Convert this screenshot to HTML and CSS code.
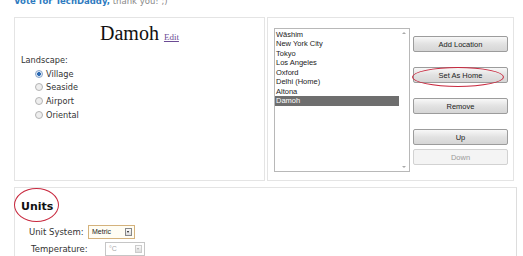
FILE: index.html
```html
<!DOCTYPE html>
<html>
<head>
  <title>Locations</title>
  <link rel="stylesheet" href="styles.css">
</head>
<body>
  <div class="vote"><b>Vote for TechDaddy,</b> thank you! ;)</div>

  <div class="row">
    <div class="panel left">
      <h1 class="city">Damoh <a href="#" class="edit">Edit</a></h1>
      <div class="label">Landscape:</div>
      <div class="radios">
        <div class="radio"><span class="dot on"></span>Village</div>
        <div class="radio"><span class="dot"></span>Seaside</div>
        <div class="radio"><span class="dot"></span>Airport</div>
        <div class="radio"><span class="dot"></span>Oriental</div>
      </div>
    </div>

    <div class="panel right">
      <div class="listbox">
        <div class="items">
          <div>Wāshim</div>
          <div>New York City</div>
          <div>Tokyo</div>
          <div>Los Angeles</div>
          <div>Oxford</div>
          <div>Delhi (Home)</div>
          <div>Altona</div>
          <div class="sel">Damoh</div>
        </div>
        <div class="scroll"><span class="up"></span><span class="down"></span></div>
      </div>
      <div class="buttons">
        <button class="btn add">Add Location</button>
        <button class="btn home">Set As Home</button>
        <button class="btn remove">Remove</button>
        <button class="btn upb">Up</button>
        <button class="btn downb" disabled>Down</button>
      </div>
      <span class="ring ring-home"></span>
    </div>
  </div>

  <div class="panel units">
    <h2 class="units-title">Units</h2>
    <span class="ring ring-units"></span>
    <div class="field sys">
      <span class="flabel">Unit System:</span>
      <span class="select active"><span class="val">Metric</span><span class="arrow"></span></span>
    </div>
    <div class="field temp">
      <span class="flabel">Temperature:</span>
      <span class="select off"><span class="val">°C</span><span class="arrow"></span></span>
    </div>
  </div>
</body>
</html>
```

FILE: styles.css
```css
body { margin: 0; background: #fff; font-family: "DejaVu Sans", Verdana, sans-serif; color: #333; }

.vote { font-size: 8.5px; line-height: 10px; margin: -4px 0 0 14px; height: 6px; color: #888; white-space: nowrap; }
.vote b { color: #2f7bbf; }

.row { display: flex; gap: 2px; margin: 15px 0 0 14px; width: 500px; }
.panel { border: 1px solid #e4e4e4; box-sizing: border-box; background: #fff; }
.left { width: 251px; height: 164px; }
.right { width: 247px; height: 164px; position: relative; display: flex; padding: 10px 0 0 6px; }

.city { margin: 3px 0 0; text-align: center; font: normal 20px/24px "Liberation Serif", serif; color: #111; }
.edit { font-size: 9px; color: #6b4b94; }

.label { font-size: 8.2px; line-height: 12px; margin: 5px 0 0 6px; }
.radios { margin: 1px 0 0 20px; }
.radio { font-size: 8.2px; height: 13.6px; display: flex; align-items: center; gap: 3px; }
.dot { width: 6px; height: 6px; border-radius: 50%; border: 1px solid #b4b4b4; background: #eee; box-sizing: content-box; }
.dot.on { background: radial-gradient(circle, #2d6bb5 0 1.6px, #dfe8f4 2.2px); border-color: #8aa6c8; }

.listbox { width: 136px; height: 144px; border: 1px solid #b8b8b8; box-sizing: border-box; display: flex; font-family: "Liberation Sans", Arial, sans-serif; font-size: 7.5px; color: #222; }
.items { flex: 1; padding-top: 0.5px; }
.items div { height: 9.5px; line-height: 9.5px; padding-left: 1px; }
.items .sel { background: #6e6e6e; color: #fff; }
.scroll { width: 10px; display: flex; flex-direction: column; justify-content: space-between; align-items: center; padding: 3px 0; }
.scroll span { width: 0; height: 0; border-left: 2px solid transparent; border-right: 2px solid transparent; }
.scroll .up { border-bottom: 2px solid #aaa; }
.scroll .down { border-top: 2px solid #aaa; }

.buttons { display: flex; flex-direction: column; margin-left: 3px; padding-top: 8px; }
.btn { width: 95px; height: 16px; padding: 0; font: 7.5px "Liberation Sans", Arial, sans-serif; color: #222; border: 1px solid #9c9c9c; border-radius: 2px; background: linear-gradient(#f8f8f8, #e2e2e2 50%, #d6d6d6); }
.home, .remove, .upb { margin-top: 15px; }
.downb { margin-top: 4px; background: #f4f4f4; border-color: #d2d2d2; color: #9a9a9a; }

.ring { position: absolute; border: 1.5px solid #c8283e; border-radius: 50%; box-sizing: border-box; }
.ring-home { left: 144px; top: 49px; width: 92px; height: 20px; }

.units { position: relative; margin: 6px 0 0 14px; width: 503px; height: 80px; padding: 12px 0 0 6px; border-right-color: #ddd; }
.units-title { margin: 0; font-size: 11px; line-height: 13px; font-weight: bold; color: #111; }
.ring-units { left: -1px; top: 0px; width: 45px; height: 34px; }

.field { display: flex; align-items: center; font-size: 8.5px; }
.sys { margin: 11px 0 0 8px; height: 15px; }
.temp { margin: 2px 0 0 10px; height: 15px; }
.sys .flabel { width: 59px; }
.temp .flabel { width: 74px; }
.select { display: flex; align-items: center; height: 14px; box-sizing: border-box; border: 1px solid; font: 7px "Liberation Sans", Arial, sans-serif; }
.select .val { flex: 1; padding-left: 3px; }
.select .arrow { width: 7px; height: 8px; margin-right: 2px; border: 1px solid #888; background: linear-gradient(#fafafa, #ddd); position: relative; box-sizing: border-box; }
.select .arrow::after { content: ""; position: absolute; left: 1px; top: 2px; border-left: 1.5px solid transparent; border-right: 1.5px solid transparent; border-top: 2px solid #111; }
.active { width: 47px; border-color: #d4b27c; background: #fffdf4; color: #222; }
.off { width: 40px; border-color: #c6c6c6; background: #fff; color: #aaa; }
.off .arrow { border-color: #ccc; }
.off .arrow::after { border-top-color: #aaa; }
```
